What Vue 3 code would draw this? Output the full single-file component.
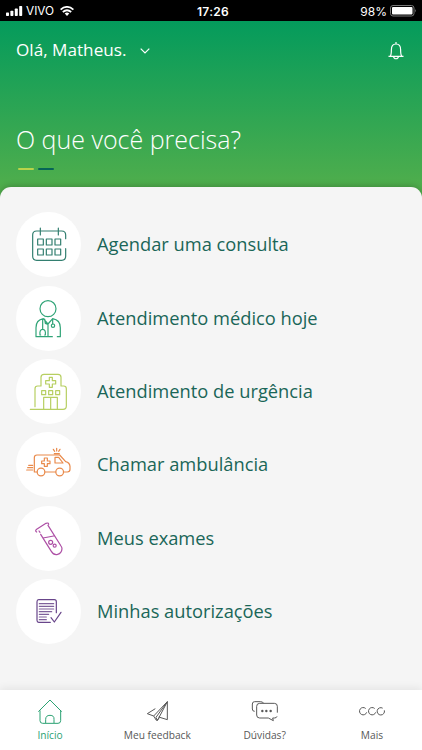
<script setup>
const actions = [
  { id: 'calendar', label: 'Agendar uma consulta', color: '#337f70', box: '17 22 195 195' },
  { id: 'doctor', label: 'Atendimento médico hoje', color: '#30a477', box: '17 20 195 195' },
  { id: 'hospital', label: 'Atendimento de urgência', color: '#b7cf62', box: '17 21 195 195' },
  { id: 'ambulance', label: 'Chamar ambulância', color: '#e98a4b', box: '17 22 195 195' },
  { id: 'tube', label: 'Meus exames', color: '#ad4fa5', box: '17 23 195 195' },
  { id: 'document', label: 'Minhas autorizações', color: '#68458a', box: '17 24 195 195' },
]
const tabs = [
  { id: 'home', label: 'Início', box: '105 42 90 90', active: true },
  { id: 'plane', label: 'Meu feedback', box: '426 42 90 90' },
  { id: 'chat', label: 'Dúvidas?', box: '117 42 90 90' },
  { id: 'more', label: 'Mais', box: '438 42 90 90' },
]
</script>

<template>
  <main class="screen">
    <div class="status">
      <div class="carrier">
        <svg class="signal" viewBox="0 0 17 10">
          <rect x="0" y="6.5" width="3" height="3.5" rx=".7" />
          <rect x="4.4" y="4.8" width="3" height="5.2" rx=".7" />
          <rect x="8.8" y="2.6" width="3" height="7.4" rx=".7" />
          <rect x="13.2" y="0" width="3" height="10" rx=".7" />
        </svg>
        <span class="vivo">VIVO</span>
        <svg class="wifi" viewBox="0 0 14 10">
          <path d="M.6 3.6Q7-1.8 13.4 3.6M2.8 6Q7 2.5 11.2 6" />
          <path class="dot" d="M4.7 7.5Q7 5.7 9.3 7.5L7 9.9Z" />
        </svg>
      </div>
      <b class="clock">17:26</b>
      <div class="power">
        <span>98%</span>
        <svg class="battery" viewBox="0 0 27 12">
          <rect x=".5" y=".5" width="23.5" height="10.5" rx="2.5" fill="none" stroke="#777" />
          <rect x="2" y="2" width="20.5" height="7.5" rx="1" fill="#fff" />
          <path d="M25 4q1.5 1.7 0 3.5Z" fill="#888" />
        </svg>
      </div>
    </div>

    <header class="hero">
      <div class="greeting">
        <span class="name">Olá, Matheus.</span>
        <svg class="chevron" viewBox="0 0 10 6"><path d="M.7.7 5 5 9.3.7" /></svg>
        <svg class="bell" viewBox="0 0 18 20">
          <path d="M9 1v2M1.5 15.3h15M3.2 15.2c1.1-1.3 1.2-2.5 1.2-6.8C4.4 5.1 6.3 3 9 3s4.6 2.1 4.6 5.4c0 4.3.1 5.5 1.2 6.8M6.6 15.5c.2 3 4.6 3 4.8 0" />
        </svg>
      </div>
      <h1 class="title">O que você precisa?</h1>
      <div class="dashes"><i class="dash lime"></i><i class="dash teal"></i></div>
    </header>

    <section class="sheet">
      <div v-for="a in actions" :key="a.id" class="row">
        <span class="disc">
          <svg class="art" :viewBox="a.box" :stroke="a.color">
            <g v-if="a.id === 'calendar'">
              <path d="M166 102V91q0-12-12-12H79q-12 0-12 12v64q0 12 12 12h75q12 0 12-12v-23M90 70v21M144 70v21" />
              <path d="M82 103h17v18H82zM108 103h17v18h-17zM134 103h17v18h-17zM82 133h17v18H82zM108 133h17v18h-17zM134 133h17v18h-17z" />
            </g>
            <g v-else-if="a.id === 'doctor'">
              <circle cx="113" cy="88" r="24" />
              <path d="M126 172h-49v-27q0-23 22-27l14 16 14-16q23 4 23 27v27h-9M113 134v38M97 119v31M91 167h-2q-2-17 8-17t8 17h-2M103 119l2 13 8 3M127 119v15" />
              <circle cx="128" cy="139" r="5" />
            </g>
            <g v-else-if="a.id === 'hospital'">
              <path d="M74 164v-54q0-8 8-8h10V76q0-9 9-9h42q9 0 9 9v26h8q8 0 8 8v52q0 10-10 10H60" />
              <path d="M117 76h9v10h10v10h-10v10h-9V96h-11V86h11zM94 116h12v12H94zM115 116h12v12h-12zM136 116h12v12h-12zM100 172v-36h41v36M121 136v36" />
            </g>
            <g v-else-if="a.id === 'ambulance'">
              <path d="M81 142h-9V99q0-8 8-8h68l18 20q12 3 13 14v9q0 8-8 8h-11M104 142h32M132 87h15M130 91h18" />
              <circle cx="92" cy="142" r="11.5" /><circle cx="148" cy="142" r="11.5" />
              <path d="M102 100h9v9h8v8h-8v8h-9v-8h-8v-8h8zM134 115V98h11l13 17zM55 122h12M52 129h15M49 136h18M129 74l4 6M139 71v8M149 74l-4 6" />
            </g>
            <g v-else-if="a.id === 'tube'">
              <path d="M79 101q-6-3 0-8l28-18q8-3 8 3M86 98l3 4M91 108l32 51q7 12 19 9t13-17q0-4-3-8l-39-62M98 119l32-6" />
              <circle cx="121" cy="132" r="6" /><circle cx="133" cy="142" r="4.5" />
            </g>
            <g v-else>
              <path d="M138 125V92q0-6-6-6H85q-5 0-5 6v56q0 6 5 6h35M122 140l10 13 20-29" />
              <path d="M87 98h43M87 106h43M87 114h43M87 122h37M87 130h28M87 138h21M87 146h21" opacity=".85" />
            </g>
          </svg>
        </span>
        <span class="label">{{ a.label }}</span>
      </div>
    </section>

    <nav class="tabs">
      <div v-for="t in tabs" :key="t.id" class="tab" :class="{ active: t.active }">
        <svg class="tab-icon" :viewBox="t.box">
          <g v-if="t.id === 'home'">
            <path d="M115 95l35-35 35 35M120 91v31q0 8 8 8h46q8 0 8-8V91M137 129v-11q0-12 13-12t12 12v11" />
          </g>
          <g v-else-if="t.id === 'plane'">
            <path d="M466 86l-24 15 19 7 41-43-34 47 4 10 30-57v54l-26-8M461 108l8 13 9-6" />
          </g>
          <g v-else-if="t.id === 'chat'">
            <path d="M131 94q-7 0-7-7V72q0-7 7-7h17q8 0 10 5M199 98V79q0-9-9-9h-44q-9 0-9 9v26q0 9 9 9h26l15 8-2-8h5q7 0 8-5" />
            <g class="dots"><circle cx="154" cy="93" r="3.6" /><circle cx="166" cy="93" r="3.6" /><circle cx="179" cy="93" r="3.6" /></g>
          </g>
          <g v-else>
            <path d="M464 85.500A11 11 0 1 0 467 97M491 85.500A11 11 0 1 0 494 97M515 84.500A11 11 0 1 0 520 91" />
          </g>
        </svg>
        <span class="tab-label">{{ t.label }}</span>
      </div>
    </nav>
  </main>
</template>

<style>
body { margin: 0; overflow: hidden; }
</style>

<style scoped>
.screen { width: 422px; height: 750px; overflow: hidden; display: flex; flex-direction: column; background: #f5f5f5; font-family: "Open Sans", sans-serif; }
.status { height: 21px; flex: none; display: grid; grid-template-columns: 1fr auto 1fr; align-items: center; background: #000; color: #fff; font: 12px/21px Inter, sans-serif; }
.carrier { display: flex; align-items: center; padding-left: 6px; }
.signal { width: 17px; height: 10px; fill: #fff; }
.vivo { margin: 1px 0 0 3px; font-size: 11.8px; }
.wifi { width: 14px; height: 10px; margin-left: 6px; fill: none; stroke: #fff; stroke-width: 1.8; }
.dot { fill: #fff; stroke: none; }
.clock { font-weight: 600; letter-spacing: .3px; padding: 1px 0 0 4px; }
.power { display: flex; align-items: center; justify-content: flex-end; gap: 3px; padding-right: 5px; }
.power span { padding-top: 1px; }
.battery { width: 27px; height: 12px; }
.hero { height: 182px; margin-bottom: -16px; flex: none; box-sizing: border-box; padding: 16px 17px 0 16px; background: linear-gradient(#049b5c, #50ae4c 92%); color: #fff; }
.greeting { height: 26px; display: flex; align-items: center; }
.name { font-size: 17.15px; line-height: 26px; }
.chevron { width: 10px; height: 6px; margin: 2px 0 0 14px; fill: none; stroke: #fff; stroke-width: 1.2; }
.bell { width: 18px; height: 20px; margin: 2px 0 0 auto; fill: none; stroke: #fff; stroke-width: 1.2; }
.title { margin: 58px 0 0; font-size: 25px; line-height: 36px; font-weight: 300; white-space: nowrap; }
.dashes { display: flex; gap: 4px; margin: 11px 0 0 2px; }
.dash { width: 16px; height: 2px; border-radius: 1px; }
.lime { background: #b9d34a; }
.teal { background: #066457; }
.sheet { flex: 1; min-height: 0; position: relative; box-sizing: border-box; padding: 21.3px 16px 0; border-radius: 11px 11px 0 0; background: #f5f5f5; box-shadow: 0 -1px 6px rgba(0, 0, 0, .22); }
.row { height: 73.3px; display: flex; align-items: center; gap: 16px; }
.disc { width: 65px; height: 65px; flex: none; border-radius: 50%; background: #fff; }
.art { display: block; width: 65px; height: 65px; fill: none; stroke-width: 3.6; stroke-linejoin: round; stroke-linecap: round; }
.label { color: #1a6658; font-size: 18.3px; line-height: 28px; margin-top: -1px; white-space: nowrap; }
.tabs { position: relative; height: 60.3px; flex: none; display: grid; grid-template-columns: repeat(4, 107.3px); justify-content: center; background: #fff; box-shadow: 0 -2px 8px rgba(0, 0, 0, .07); }
.tab { display: flex; flex-direction: column; align-items: center; padding-top: 4.3px; color: #585858; }
.tab-icon { width: 30px; height: 30px; fill: none; stroke: currentColor; stroke-width: 3; stroke-linejoin: round; }
.dots { fill: currentColor; stroke: none; }
.tab-label { margin-top: 2.5px; font-size: 10.2px; line-height: 16px; white-space: nowrap; }
.active { color: #2ba273; }
</style>
